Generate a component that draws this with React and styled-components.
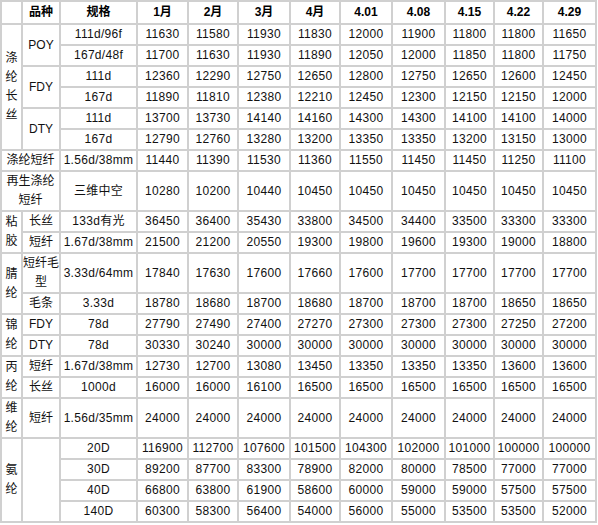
import styled, { createGlobalStyle } from 'styled-components'

const GlobalStyle = createGlobalStyle`
    html, body {
        margin: 0;
        padding: 0;
        background: #ffffff;
    }
    body {
        font-family: "Liberation Sans", "Noto Sans CJK SC", sans-serif;
        font-size: 12px;
        color: #111111;
    }
`

const columns = [
    { label: '', width: 21 },
    { label: '品种', width: 38 },
    { label: '规格', width: 77 },
    { label: '1月', width: 51 },
    { label: '2月', width: 50 },
    { label: '3月', width: 52 },
    { label: '4月', width: 50 },
    { label: '4.01', width: 52 },
    { label: '4.08', width: 53 },
    { label: '4.15', width: 49 },
    { label: '4.22', width: 49 },
    { label: '4.29', width: 53 },
]

// cat / kind only on the row where the merged cell starts
const rows = [
    { cat: { text: '涤纶长丝', rowSpan: 6 }, kind: { text: 'POY', rowSpan: 2 }, spec: '111d/96f', values: [11630, 11580, 11930, 11830, 12000, 11900, 11800, 11800, 11650] },
    { spec: '167d/48f', values: [11700, 11630, 11930, 11890, 12050, 12000, 11850, 11800, 11750] },
    { kind: { text: 'FDY', rowSpan: 2 }, spec: '111d', values: [12360, 12290, 12750, 12650, 12800, 12750, 12650, 12600, 12450] },
    { spec: '167d', values: [11890, 11810, 12380, 12210, 12450, 12300, 12150, 12150, 12000] },
    { kind: { text: 'DTY', rowSpan: 2 }, spec: '111d', values: [13700, 13730, 14140, 14160, 14300, 14300, 14100, 14100, 14000] },
    { spec: '167d', values: [12790, 12760, 13280, 13200, 13350, 13350, 13200, 13150, 13000] },
    { cat: { text: '涤纶短纤', colSpan: 2 }, spec: '1.56d/38mm', values: [11440, 11390, 11530, 11360, 11550, 11450, 11450, 11250, 11100] },
    { cat: { text: '再生涤纶短纤', colSpan: 2 }, spec: '三维中空', values: [10280, 10200, 10440, 10450, 10450, 10450, 10450, 10450, 10450] },
    { cat: { text: '粘胶', rowSpan: 2 }, kind: { text: '长丝' }, spec: '133d有光', values: [36450, 36400, 35430, 33800, 34500, 34400, 33500, 33300, 33300] },
    { kind: { text: '短纤' }, spec: '1.67d/38mm', values: [21500, 21200, 20550, 19300, 19800, 19600, 19300, 19000, 18800] },
    { cat: { text: '腈纶', rowSpan: 2 }, kind: { text: '短纤毛型' }, spec: '3.33d/64mm', values: [17840, 17630, 17600, 17660, 17600, 17700, 17700, 17700, 17700] },
    { kind: { text: '毛条' }, spec: '3.33d', values: [18780, 18680, 18700, 18680, 18700, 18700, 18700, 18650, 18650] },
    { cat: { text: '锦纶', rowSpan: 2 }, kind: { text: 'FDY' }, spec: '78d', values: [27790, 27490, 27400, 27270, 27300, 27300, 27300, 27250, 27200] },
    { kind: { text: 'DTY' }, spec: '78d', values: [30330, 30240, 30000, 30000, 30000, 30000, 30000, 30000, 30000] },
    { cat: { text: '丙纶', rowSpan: 2 }, kind: { text: '短纤' }, spec: '1.67d/38mm', values: [12730, 12700, 13080, 13450, 13350, 13350, 13350, 13600, 13600] },
    { kind: { text: '长丝' }, spec: '1000d', values: [16000, 16000, 16100, 16500, 16500, 16500, 16500, 16500, 16500] },
    { cat: { text: '维纶' }, kind: { text: '短纤' }, spec: '1.56d/35mm', values: [24000, 24000, 24000, 24000, 24000, 24000, 24000, 24000, 24000] },
    { cat: { text: '氨纶', rowSpan: 4 }, kind: { text: '', rowSpan: 4 }, spec: '20D', values: [116900, 112700, 107600, 101500, 104300, 102000, 101000, 100000, 100000] },
    { spec: '30D', values: [89200, 87700, 83300, 78900, 82000, 80000, 78500, 77000, 77000] },
    { spec: '40D', values: [66800, 63800, 61900, 58600, 60000, 59000, 59000, 57500, 57500] },
    { spec: '140D', values: [60300, 58300, 56400, 54000, 56000, 55000, 53500, 53500, 52000] },
]

const App = () => {
    return(
        <>
            <GlobalStyle />
            <PriceTable>
                <thead>
                    <tr>
                        {columns.map((col, i) => (
                            <HeadCell key={i} $width={col.width}>{col.label}</HeadCell>
                        ))}
                    </tr>
                </thead>
                <tbody>
                    {rows.map((row, i) => (
                        <tr key={i}>
                            {row.cat && (
                                <Cell rowSpan={row.cat.rowSpan || 1} colSpan={row.cat.colSpan || 1}>{row.cat.text}</Cell>
                            )}
                            {row.kind && (
                                <Cell rowSpan={row.kind.rowSpan || 1}>{row.kind.text}</Cell>
                            )}
                            <Cell $spaced>{row.spec}</Cell>
                            {row.values.map((v, j) => (
                                <Cell key={j} $spaced>{v}</Cell>
                            ))}
                        </tr>
                    ))}
                </tbody>
            </PriceTable>
        </>
    )
}

export default App

const PriceTable = styled.table`
    width: 597px;
    table-layout: fixed;
    border-collapse: separate;
    border-spacing: 0;
    border: 1px solid #d0d0d0;
    margin: 0;
`

const HeadCell = styled.th`
    box-sizing: border-box;
    width: ${props => props.$width}px;
    border: 1px solid #d0d0d0;
    padding: 1px 0;
    line-height: 19px;
    font-size: 12px;
    font-weight: bold;
    color: #000000;
    text-align: center;
    vertical-align: middle;
`

const Cell = styled.td`
    box-sizing: border-box;
    border: 1px solid #d0d0d0;
    padding: 0;
    line-height: 19px;
    font-size: 12px;
    text-align: center;
    vertical-align: middle;
    letter-spacing: ${props => props.$spaced ? '0.3px' : '0'};
`
